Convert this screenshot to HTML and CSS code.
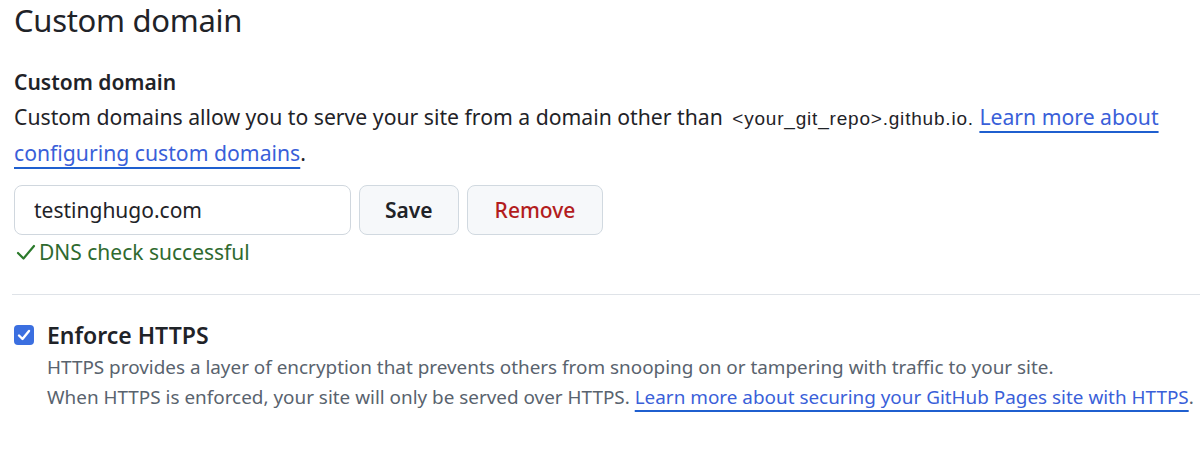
FILE: index.html
```html
<!DOCTYPE html>
<html lang="en">
<head>
<meta charset="utf-8">
<title>Custom domain</title>
<link rel="stylesheet" href="styles.css">
</head>
<body>
<main class="page">
  <h1 class="title">Custom domain</h1>
  <section class="domain">
    <h2 class="sub">Custom domain</h2>
    <p class="desc">Custom domains allow you to serve your site from a domain other than <span class="repo">&lt;your_git_repo&gt;.github.io.</span> <a class="link" href="#">Learn more about configuring custom domains</a>.</p>
    <form class="row">
      <input class="field" type="text" value="testinghugo.com">
      <button class="btn" type="button">Save</button>
      <button class="btn btn-danger" type="button">Remove</button>
    </form>
    <div class="ok">
      <svg class="ok-icon" viewBox="0 0 20 20" width="20" height="20" aria-hidden="true"><path d="M2 11 L7.5 16.5 L18 4" fill="none" stroke="currentColor" stroke-width="2.2" stroke-linecap="round" stroke-linejoin="round"/></svg>
      <span>DNS check successful</span>
    </div>
  </section>
  <hr class="divider">
  <section class="https">
    <label class="check-row">
      <input class="check" type="checkbox" checked>
      <span class="check-label">Enforce HTTPS</span>
    </label>
    <p class="note">HTTPS provides a layer of encryption that prevents others from snooping on or tampering with traffic to your site.<br>When HTTPS is enforced, your site will only be served over HTTPS. <a class="link" href="#">Learn more about securing your GitHub Pages site with HTTPS</a>.</p>
  </section>
</main>
</body>
</html>
```
FILE: styles.css
```css
* { box-sizing: border-box; }
html, body { margin: 0; background: #ffffff; }
body {
  font-family: "Noto Sans", "Open Sans", sans-serif;
  color: #1f2328;
}
.page { padding: 0 0 0 14px; }
.title {
  margin: 0;
  font-size: 31px;
  font-weight: 400;
  line-height: 40px;
  letter-spacing: -0.3px;
}
.domain { margin-top: 27px; }
.sub {
  margin: 0;
  font-size: 21px;
  font-weight: 600;
  line-height: 30px;
}
.desc {
  margin: 3px 0 0;
  max-width: 1172px;
  font-size: 21.2px;
  line-height: 34px;
}
.repo {
  margin-left: 4px;
  font-size: 19px;
  font-family: "Liberation Sans", sans-serif;
  letter-spacing: 0.8px;
}
.link {
  color: #3a5fd9;
  text-decoration: underline;
  text-decoration-color: #1f5fcf;
  text-underline-offset: 6px;
  text-decoration-thickness: 2px;
}
.row {
  display: flex;
  gap: 8px;
  margin: 15px 0 0;
}
.field {
  width: 337px;
  height: 50px;
  padding: 0 19px;
  border: 1px solid #d0d7de;
  border-radius: 8px;
  font: inherit;
  font-size: 21px;
  color: #1f2328;
}
.btn {
  height: 50px;
  padding: 0 25px;
  border: 1px solid #d1d9e0;
  border-radius: 8px;
  background: #f6f8fa;
  font: inherit;
  font-size: 21px;
  font-weight: 600;
  color: #1f2328;
}
.btn-danger { color: #b31d1d; font-weight: 500; padding: 0 27px; }
.ok {
  display: flex;
  align-items: center;
  gap: 3px;
  margin-top: 3px;
  font-size: 21px;
  line-height: 28px;
  color: #2f6a2f;
}
.ok-icon { color: #2b7a2b; margin-left: 2px; }
.divider {
  margin: 28px 0 0 -2px;
  border: 0;
  border-top: 1px solid #dfe3e8;
}
.https { margin-top: 25px; }
.check-row {
  display: flex;
  align-items: center;
  gap: 13px;
}
.check {
  appearance: none;
  margin: 0;
  width: 20px;
  height: 20px;
  border-radius: 4px;
  background: #3b6fe0 url("data:image/svg+xml,%3Csvg xmlns='http://www.w3.org/2000/svg' viewBox='0 0 20 20'%3E%3Cpath d='M5 10.5 L8.5 14 L15 6' fill='none' stroke='white' stroke-width='2.4' stroke-linecap='round' stroke-linejoin='round'/%3E%3C/svg%3E") center/100% no-repeat;
}
.check-label {
  font-size: 23px;
  font-weight: 600;
  line-height: 30px;
}
.note {
  margin: 2px 0 0 33px;
  font-size: 18.9px;
  line-height: 30px;
  color: #59636e;
  white-space: nowrap;
}
```
